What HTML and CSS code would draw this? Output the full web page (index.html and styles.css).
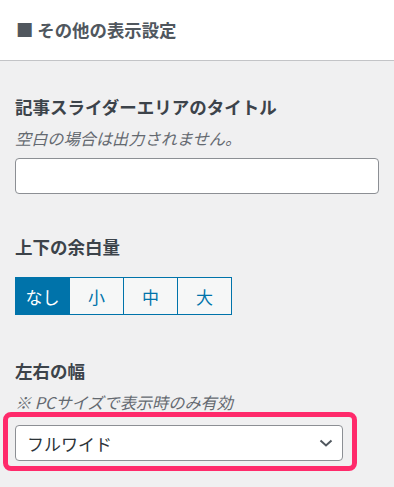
FILE: index.html
```html
<!DOCTYPE html>
<html lang="ja">
<head>
    <meta charset="utf-8">
    <title>その他の表示設定</title>
    <meta name="viewport" content="width=device-width, initial-scale=1.0">
    <link rel="stylesheet" href="styles.css">
</head>
<body>
    <div class="panel-header">
        <h2 class="panel-title">■ その他の表示設定</h2>
    </div>

    <div class="panel-body">
        <div class="control">
            <label class="control-label" for="sliderTitle">記事スライダーエリアのタイトル</label>
            <p class="control-desc">空白の場合は出力されません。</p>
            <input type="text" id="sliderTitle" class="text-input">
        </div>

        <div class="control control-spacing">
            <div class="control-label">上下の余白量</div>
            <div class="button-group">
                <button class="seg-btn active">なし</button>
                <button class="seg-btn">小</button>
                <button class="seg-btn">中</button>
                <button class="seg-btn">大</button>
            </div>
        </div>

        <div class="control control-width">
            <div class="control-label">左右の幅</div>
            <p class="control-desc">※ PCサイズで表示時のみ有効</p>
            <div class="highlight">
                <div class="select-wrap">
                    <select class="select-input">
                        <option>フルワイド</option>
                        <option>コンテンツ幅</option>
                    </select>
                    <svg class="chevron" width="14" height="8" viewBox="0 0 14 8">
                        <path d="M1.5 1.5 L7 6.5 L12.5 1.5" fill="none" stroke="#50575e" stroke-width="2"/>
                    </svg>
                </div>
            </div>
        </div>
    </div>
</body>
</html>
```

FILE: styles.css
```css
* {
    box-sizing: border-box;
    margin: 0;
    padding: 0;
}

body {
    background-color: #f0f0f1;
    font-family: "Noto Sans CJK JP", "Noto Sans", sans-serif;
    color: #3c434a;
    width: 394px;
    min-height: 487px;
    overflow: hidden;
}

.panel-header {
    background: #fff;
    height: 61px;
    border-bottom: 1px solid #c3c4c7;
    display: flex;
    align-items: center;
    padding-left: 16px;
}

.panel-title {
    font-size: 17.4px;
    font-weight: bold;
    color: #50575e;
    line-height: 24px;
}

.panel-body {
    padding: 34px 15px 0;
}

.control-label {
    display: block;
    font-size: 17.5px;
    font-weight: bold;
    line-height: 24px;
    color: #3c434a;
}

.control-desc {
    font-size: 16.2px;
    font-style: italic;
    line-height: 20px;
    color: #646970;
    margin-top: 9px;
}

.text-input {
    display: block;
    width: 100%;
    height: 36px;
    margin-top: 10px;
    background: #fff;
    border: 1px solid #8c8f94;
    border-radius: 4px;
}

.control-spacing {
    margin-top: 41px;
}

.button-group {
    display: flex;
    margin-top: 18px;
}

.seg-btn {
    width: 55px;
    height: 38px;
    margin-left: -1px;
    background: #f6f7f7;
    border: 1px solid #0073aa;
    color: #0073aa;
    font-family: inherit;
    font-size: 17px;
}

.seg-btn:first-child {
    margin-left: 0;
}

.seg-btn.active {
    background: #0073aa;
    color: #fff;
}

.control-width {
    margin-top: 44px;
}

.control-width .control-desc {
    margin-top: 9px;
}

/* pink annotation frame round the select */
.highlight {
    width: 354px;
    margin-left: -12px;
    border: 5px solid #ff2a6b;
    border-radius: 8px;
    padding: 8px 9px 5px 7px;
}

.select-wrap {
    position: relative;
}

.select-input {
    display: block;
    width: 100%;
    height: 36px;
    appearance: none;
    -webkit-appearance: none;
    background: #fff;
    border: 1px solid #8c8f94;
    border-radius: 4px;
    padding-left: 11px;
    font-family: inherit;
    font-size: 17px;
    color: #2c3338;
}

.chevron {
    position: absolute;
    right: 10px;
    top: 14px;
    pointer-events: none;
}
```
